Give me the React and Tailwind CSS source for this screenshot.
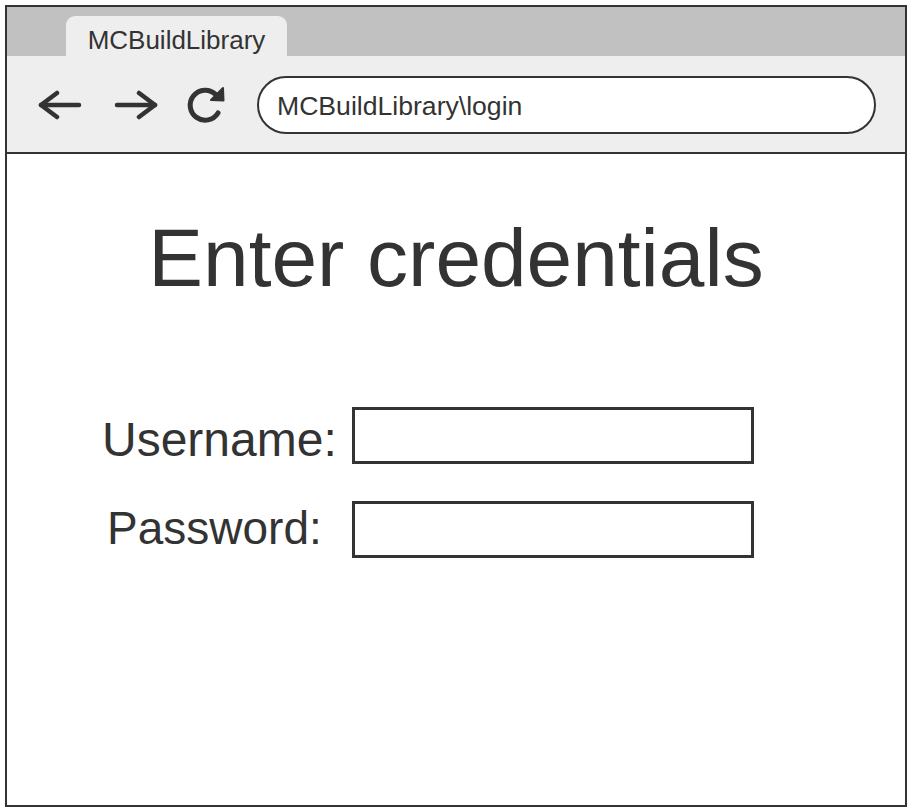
import React from 'react';

const ink = '#333333';

const BackArrow = () => (
  <svg width="44" height="34" viewBox="0 0 44 34" fill="none" stroke={ink} strokeWidth="4.5" strokeLinecap="round" strokeLinejoin="round">
    <path d="M3 17H41" />
    <path d="M19 5L3 17L19 29" />
  </svg>
);

const ForwardArrow = () => (
  <svg width="44" height="34" viewBox="0 0 44 34" fill="none" stroke={ink} strokeWidth="4.5" strokeLinecap="round" strokeLinejoin="round">
    <path d="M3 17H41" />
    <path d="M25 5L41 17L25 29" />
  </svg>
);

const Reload = () => (
  <svg width="40" height="40" viewBox="0 0 40 40" fill="none" stroke={ink} strokeWidth="5" strokeLinecap="round" strokeLinejoin="round">
    <path d="M33 28A15 15 0 1 1 30.6 9.4" />
    <path d="M38 3L38.5 15.5L26 15Z" fill={ink} strokeWidth="2" />
  </svg>
);

const Field = () => (
  <div className="w-[402px] h-[57px] border-[3px] border-[#333333] bg-white" />
);

const App = () => {
  return (
    <div className="w-[912px] h-[812px] bg-white pt-[5px] pl-[5px]" style={{ fontFamily: '"Liberation Sans", Arial, sans-serif' }}>
      <div className="w-[902px] h-[802px] border-2 border-[#333333] flex flex-col text-[#333333]">
        {/* tab strip */}
        <div className="h-[49px] bg-[#c1c1c1] flex items-end pl-[59px]">
          <div className="w-[221px] h-[40px] bg-[#eeeeee] rounded-t-[9px] flex items-center justify-center text-[26px] leading-none pt-[8px]">
            MCBuildLibrary
          </div>
        </div>

        {/* toolbar */}
        <div className="h-[98px] bg-[#eeeeee] border-b-2 border-[#333333] flex items-center">
          <div className="ml-[31px] mt-[2px]"><BackArrow /></div>
          <div className="ml-[32px] mt-[2px]"><ForwardArrow /></div>
          <div className="ml-[27px] mt-[2px]"><Reload /></div>
          <div className="ml-[32px] mt-[2px] w-[619px] h-[58px] rounded-full border-[2.5px] border-[#333333] bg-white flex items-center pl-[18px] pt-[2px] text-[26.6px] leading-none">
            MCBuildLibrary\login
          </div>
        </div>

        {/* page */}
        <div className="flex-1 bg-white flex flex-col">
          <h1 className="mt-[63px] text-center text-[82px] leading-none font-normal">Enter credentials</h1>

          <div className="mt-[108px] flex items-start">
            <div className="ml-[95px] w-[250px] pt-[9px] text-[48px] leading-none">Username:</div>
            <Field />
          </div>

          <div className="mt-[37px] flex items-start">
            <div className="ml-[100px] w-[245px] pt-[4px] text-[46px] leading-none">Password:</div>
            <Field />
          </div>
        </div>
      </div>
    </div>
  );
};

export default App;
